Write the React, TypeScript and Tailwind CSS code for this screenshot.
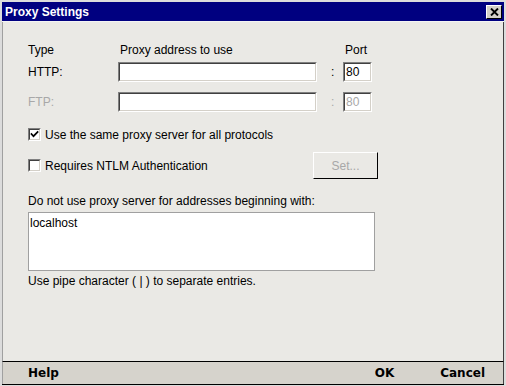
import React from "react";

// sunken 3D field, classic windows look
const Sunken: React.FC<{ className?: string; children?: React.ReactNode }> = ({ className = "", children }) => (
  <div className={`border-t border-l border-[#808080] border-b border-r border-b-white border-r-white ${className}`}>
    <div className="h-full w-full border-t border-l border-[#404040] border-b border-r border-b-[#d4d0c8] border-r-[#d4d0c8] bg-white">
      {children}
    </div>
  </div>
);

const CheckBox: React.FC<{ checked?: boolean }> = ({ checked }) => (
  <Sunken className="h-[13px] w-[13px] shrink-0">
    {checked && (
      <svg width="9" height="9" viewBox="0 0 9 9" className="block">
        <path d="M1.5 4 L3.5 6.2 L7.6 2" fill="none" stroke="#000" strokeWidth="1.7" strokeLinecap="square" />
      </svg>
    )}
  </Sunken>
);

export default function App() {
  return (
    <div className="h-[386px] w-[506px] bg-[#dcdcdc] pl-[2px] pr-[2px] pt-[2px] pb-[1px] font-['Liberation_Sans',Arial,sans-serif] text-[12px] leading-[14px] text-black">
      <div className="flex h-full flex-col border-b border-black">
        {/* title bar */}
        <div className="flex h-[20px] shrink-0 items-center justify-between border-b border-[#f4f4f4] bg-[#000080] pl-[3px] pr-[2px]">
          <span className="text-[12px] font-bold text-white">Proxy Settings</span>
          <div className="flex h-[14px] w-[16px] items-center justify-center border-t border-l border-white border-b border-r border-b-black border-r-black bg-[#d4d0c8]">
            <svg width="9" height="8" viewBox="0 0 9 8">
              <path d="M1 0.5 L8 7.5 M8 0.5 L1 7.5" stroke="#000" strokeWidth="1.9" />
            </svg>
          </div>
        </div>

        {/* content */}
        <div className="flex flex-1 flex-col border-l border-r border-l-[#a0a0a0] border-r-[#404040] bg-[#eae9e5] pl-[25px] pt-[21px]">
          <div className="grid grid-cols-[90px_199px_26px_29px] items-center gap-y-[5px]">
            <span>Type</span>
            <span className="pl-[2px]">Proxy address to use</span>
            <span />
            <span className="pl-[2px]">Port</span>

            <span>HTTP:</span>
            <Sunken className="h-[20px]" />
            <span className="pl-[14px]">:</span>
            <Sunken className="h-[20px]">
              <span className="block pl-[1px] leading-[16px]">80</span>
            </Sunken>
          </div>
          <div className="mt-[10px] grid grid-cols-[90px_199px_26px_29px] items-center text-[#a8a8a8]">
            <span>FTP:</span>
            <Sunken className="h-[20px]" />
            <span className="pl-[14px]">:</span>
            <Sunken className="h-[20px]">
              <span className="block pl-[1px] leading-[16px]">80</span>
            </Sunken>
          </div>

          <div className="mt-[16px] flex h-[13px] items-center gap-[4px]">
            <CheckBox checked />
            <span>Use the same proxy server for all protocols</span>
          </div>

          <div className="mt-[11px] flex h-[27px] w-[350px] items-center justify-between">
            <div className="flex items-center gap-[4px]">
              <CheckBox />
              <span>Requires NTLM Authentication</span>
            </div>
            <div className="flex h-[27px] w-[65px] items-center justify-center border-t border-l border-white border-b border-r border-b-black border-r-black bg-[#eae9e5]">
              <span className="text-[#a8a8a8]">Set...</span>
            </div>
          </div>

          <div className="mt-[15px]">Do not use proxy server for addresses beginning with:</div>
          <div className="mt-[4px] h-[59px] w-[347px] border border-[#a0a0a0] bg-white pl-[1px] pt-[3px]">
            localhost
          </div>
          <div className="mt-[3px]">Use pipe character ( | ) to separate entries.</div>
        </div>

        {/* bottom bar */}
        <div className="flex h-[23px] shrink-0 items-center justify-between border-t border-l border-r border-t-black border-l-[#a0a0a0] border-r-[#404040] bg-[#d6d3cc] pl-[25px] pr-[18px] font-['DejaVu_Sans',Verdana,sans-serif] text-[12px] font-bold">
          <span>Help</span>
          <div className="flex items-center gap-[46px]">
            <span>OK</span>
            <span>Cancel</span>
          </div>
        </div>
      </div>
    </div>
  );
}
